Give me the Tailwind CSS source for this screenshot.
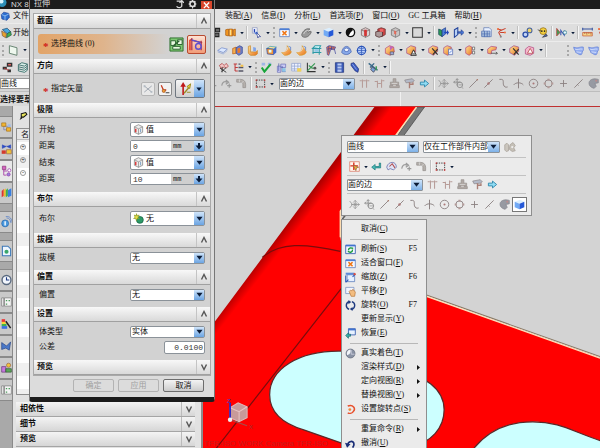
<!DOCTYPE html>
<html lang="zh-CN">
<head>
<meta charset="utf-8">
<title>NX 8</title>
<script src="https://cdn.jsdelivr.net/npm/@tailwindcss/browser@4"></script>
</head>
<body class="h-screen overflow-hidden relative flex flex-col bg-[#dcdcdc] font-['Liberation_Serif','Noto_Sans_CJK_SC',sans-serif] text-[8px] leading-[12px] text-[#111]">

<svg class="absolute w-0 h-0" aria-hidden="true">
  <defs>
    <linearGradient id="gOr" x1="0" y1="0" x2="1" y2="1"><stop offset="0" stop-color="#ffe79a"/><stop offset="1" stop-color="#e8701c"/></linearGradient>
  </defs>
  <symbol id="fold" viewBox="0 0 16 16"><path d="M1 4l4-1v10l-4-1zM6 3h5v10H6zM12 4l3-1v10l-3-1z" fill="#f59a22" stroke="#a8580a"/><path d="M7 4h2v8H7z" fill="#ffe08a"/></symbol>
  <symbol id="info" viewBox="0 0 16 16"><path d="M2 1h7v8H2z" fill="#f2f6ff" stroke="#8a93b8"/><path d="M5 3v5" stroke="#2744b0" stroke-width="2"/><circle cx="8" cy="9" r="2" fill="#4a7be0"/><path d="M8 8l6 6-3 0-1 2z" fill="#fff" stroke="#2a3a90"/></symbol>
  <symbol id="winx" viewBox="0 0 16 16"><path d="M1 3h14v11H1z" fill="#f4f8ff" stroke="#4d6fb5"/><path d="M1 2h14v2.500H1z" fill="#4d7fd6"/><path d="M5 6l6 6M11 6l-6 6" stroke="#f07818" stroke-width="2.200"/></symbol>
  <symbol id="swoosh" viewBox="0 0 16 16"><path d="M1 11C3 5 8 1 13 3c-3 1-4 3-3 5 2-2 4-2 5-1-1 4-5 8-9 8-3 0-5-1-5-4z" fill="#9a9a9a" stroke="#5a5a5a"/><path d="M4 10c1-3 4-5 6-5" stroke="#eee" fill="none"/></symbol>
  <symbol id="cube" viewBox="0 0 16 16"><path d="M1 4l8-3 6 3-7 3z" fill="#dcefff"/><path d="M1 4l7 3v8l-7-3z" fill="#72aaf5"/><path d="M8 7l7-3v8l-7 3z" fill="#2559d8"/></symbol>
  <symbol id="half" viewBox="0 0 16 16"><circle cx="8" cy="8" r="6" fill="#fff" stroke="#111" stroke-width="2"/><path d="M8 2a6 6 0 0 0-6 6 6 6 0 0 0 3 5l3-5 4-4a6 6 0 0 0-4-2z" fill="#111"/></symbol>
  <symbol id="rcube" viewBox="0 0 16 16"><path d="M2 4l6-3 6 3v8l-6 3-6-3z" fill="#d8d2d2" stroke="#6b5555"/><path d="M2 4l6 3 6-3M8 7v8" stroke="#6b5555" fill="none"/><path d="M6 4h4v9H6z" fill="#d23333"/></symbol>
  <symbol id="rcube2" viewBox="0 0 16 16"><path d="M4 3l5-2 6 2v8l-5 3-6-3z" fill="#c44" stroke="#633"/><path d="M1 7l5-1 5 1v6l-5 2-5-2z" fill="#a99" stroke="#422"/><path d="M7 3h5v4H7z" fill="#e66"/></symbol>
  <symbol id="rcube3" viewBox="0 0 16 16"><path d="M2 4l6-3 6 3v8l-6 3-6-3z" fill="#c7c3c3" stroke="#666"/><path d="M2 4l6 3 6-3M8 7v8" stroke="#777" fill="none"/><path d="M6 5l3 1v5l-3-1z" fill="#e26a5a"/></symbol>
  <symbol id="sq" viewBox="0 0 16 16"><path d="M1 1h14v14H1z" fill="#d8d8d8" stroke="#333" stroke-width="1.500"/></symbol>
  <symbol id="door" viewBox="0 0 16 16"><path d="M1 3l5 2v9l-5-3z" fill="#2f9a54" stroke="#145"/><path d="M6 4l5-3v9l-5 4z" fill="#4d7fd6" stroke="#1b3b8a"/><path d="M9 7h4V4l3 4-3 4V9H9z" fill="#2346b8"/></symbol>
  <symbol id="door2" viewBox="0 0 16 16"><path d="M2 4l5-3v10l-5 4z" fill="#b9d2f5" stroke="#24449a" stroke-width="1.500"/><path d="M7 7h5V4l4 4-4 4V9H7z" fill="#4a78d8" stroke="#1f3d90"/></symbol>
  <symbol id="tbl" viewBox="0 0 16 16"><path d="M4 1h8l3 3v10H4z" fill="#e9f1ff" stroke="#5b74b0"/><path d="M1 6h12v8H1zM1 9h12M1 11.500h12M5 6v8M9 6v8" fill="#cde" stroke="#3c5fa8"/></symbol>
  <symbol id="skt" viewBox="0 0 16 16"><path d="M2 3l5 1-3 4 3 6M7 5l7-3M6 8h7" stroke="#c8402c" fill="none" stroke-width="1.500"/><circle cx="3" cy="3" r="1.500" fill="#f07040"/><circle cx="13" cy="8" r="1.500" fill="#f07040"/><circle cx="7" cy="14" r="1.500" fill="#888"/></symbol>
  <symbol id="link" viewBox="0 0 16 16"><circle cx="5" cy="11" r="3.500" fill="#c3d4f5" stroke="#2c4fa8" stroke-width="2"/><circle cx="11" cy="5" r="3.500" fill="#f0d46a" stroke="#47639e" stroke-width="1.500"/></symbol>
  <symbol id="gear" viewBox="0 0 16 16"><circle cx="9" cy="6" r="5" fill="#f3cf3e" stroke="#8a6410"/><circle cx="7" cy="6" r="1.200" fill="#222"/><circle cx="11" cy="6" r="1.200" fill="#222"/><path d="M1 4l5 2M8 15l5-5 2 3z" fill="#4665b8" stroke="#333"/></symbol>
  <symbol id="play" viewBox="0 0 16 16"><path d="M1 2v11l5-5z" fill="#3f9f56" stroke="#b33"/><path d="M7 12V5l5 7V5" stroke="#3a55b0" fill="none" stroke-width="1.500"/><circle cx="13" cy="8" r="2.500" fill="#e8f6ff" stroke="#278"/></symbol>
  <symbol id="meas" viewBox="0 0 16 16"><path d="M1 3h14M1 1v4M15 1v4" stroke="#34509e" stroke-width="1.500"/><path d="M1 8h14v5H1z" fill="#f7d888" stroke="#c5542e"/><path d="M4 8v2M7 8v3M10 8v2M13 8v3" stroke="#933"/></symbol>
  <symbol id="sheet" viewBox="0 0 16 16"><path d="M1 8l6-4 8 2-6 5z" fill="#dbe8ff" stroke="#6c86c8"/><path d="M1 10l8 3 6-5" fill="none" stroke="#8ba2d8"/></symbol>
  <symbol id="ext" viewBox="0 0 16 16"><path d="M1 5l5-2v9l-5 1z" fill="#f9b04c" stroke="#b85a14"/><path d="M6 4l5-3 4 2v9l-5 3-4-3z" fill="#6d7fc8" stroke="#2e3f8e"/><path d="M8 5l4-1v7l-4 1z" fill="#ed7a28"/></symbol>
  <symbol id="bend" viewBox="0 0 16 16"><path d="M2 2l3-1v9l8 0 2-2v5l-3 2H5l-3-3z" fill="url(#gOr)" stroke="#c98522"/><path d="M9 3l4 1v5H9z" fill="#7fa4ea"/></symbol>
  <symbol id="ocube" viewBox="0 0 16 16"><path d="M1 5l5-3 9 1-4 3z" fill="#ffe1a0" stroke="#39a"/><path d="M1 5l10 1v8L2 13z" fill="#f39334" stroke="#2849a8"/><path d="M11 6l4-3v8l-4 3z" fill="#4368cc"/><path d="M4 7h4v4H4z" fill="#dff"/></symbol>
  <symbol id="blend" viewBox="0 0 16 16"><path d="M9 1c1 6-2 9-8 10l4 4c6 0 9-2 10-5z" fill="url(#gOr)" stroke="#d89a2a"/><path d="M2 10c5 0 8-3 8-7" stroke="#eef" fill="none"/><path d="M11 2l3 1v5" stroke="#4770c8" fill="none"/></symbol>
  <symbol id="frame" viewBox="0 0 16 16"><path d="M3 4l3-3h8l-2 4zM3 4v9M12 5v9M1 5h14M2 11h13" fill="#e4ffff" stroke="#2b9aa6" stroke-width="1.500"/><path d="M5 6h6v4H5z" fill="#8fc8e8"/></symbol>
  <symbol id="mesh" viewBox="0 0 16 16"><path d="M1 3l4-2 9 2-2 4-5-1-3 9-2-1z" fill="#e67a55" stroke="#42459e"/><path d="M4 1v10M8 2v5M2 6l10-2M12 5l2 8" stroke="#3a3f9a"/></symbol>
  <symbol id="dome" viewBox="0 0 16 16"><path d="M1 11c1-6 4-9 7-9s6 3 7 8c-4 5-10 5-14 1z" fill="#87a8e8" stroke="#3d5cae"/><ellipse cx="8" cy="7" rx="3.500" ry="2.500" fill="#f2f7ff" stroke="#3d5cae"/></symbol>
  <symbol id="globe" viewBox="0 0 16 16"><circle cx="8" cy="8" r="6" fill="#bdd2fa" stroke="#2c55b8" stroke-width="1.800"/><path d="M8 1v14M1 8h14M4 4c2 2 6 2 8 0M4 12c2-2 6-2 8 0" stroke="#2c55b8" fill="none"/></symbol>
  <symbol id="ball" viewBox="0 0 16 16"><path d="M2 5l6-4 6 2 1 7-6 5-7-3z" fill="url(#gOr)" stroke="#b0417a"/><path d="M8 1l1 7 5-5z" fill="#c266b8"/><path d="M9 10h5v4H9z" fill="#9fa8d8" stroke="#556"/></symbol>
  <symbol id="ballA" viewBox="0 0 16 16"><path d="M1 5l6-4 7 2v7l-6 5-7-3z" fill="url(#gOr)" stroke="#a04a8a"/><path d="M7 15l4-8 4 8zM9 13h4" fill="#fff" stroke="#222" stroke-width="1.300"/></symbol>
  <symbol id="ballX" viewBox="0 0 16 16"><path d="M1 5l6-4 7 2v6l-6 6-7-4z" fill="url(#gOr)" stroke="#a04a8a"/><path d="M6 5l8 9M14 6l-7 8" stroke="#333" stroke-width="1.700"/></symbol>
  <symbol id="ballB" viewBox="0 0 16 16"><path d="M1 4l5-3 6 2v8l-5 4-6-3z" fill="url(#gOr)" stroke="#a04a8a"/><path d="M8 6h6v8H8z" fill="#eef2ff" stroke="#5067b0"/><path d="M9 12l4-4" stroke="#36c"/></symbol>
  <symbol id="ballD" viewBox="0 0 16 16"><path d="M1 4l5-3 4 2v9l-4 3-5-3z" fill="url(#gOr)" stroke="#b0417a"/><path d="M11 3h3v4h-3zM11 9h3v4h-3z" fill="#fff" stroke="#555"/></symbol>
  <symbol id="ballR" viewBox="0 0 16 16"><path d="M1 6l5-4 8 1-1 4-6 1-1 5-5-1z" fill="url(#gOr)" stroke="#b0417a"/><path d="M6 12h9M13 10l2 2-2 2" stroke="#333" fill="none"/></symbol>
  <symbol id="ballP" viewBox="0 0 16 16"><path d="M2 6l5-4 7 2v8l-5 3-7-2z" fill="#f4b8cc" stroke="#b0417a"/><path d="M5 12l4-7 4 7z" fill="#fff" stroke="#a33"/></symbol>
  <symbol id="surf" viewBox="0 0 16 16"><path d="M1 3c5 3 9-1 14 0v5c-2 0-1 5-3 6-3 1-5-2-8-3 0-3-3-4-3-8z" fill="#94aef0" stroke="#5f7ed8"/><path d="M3 6c4 2 7-1 11 0M5 10c3 1 5 0 7 1" stroke="#e3ebff" fill="none"/></symbol>
  <symbol id="dims" viewBox="0 0 16 16"><path d="M2 5l4-3 3 3 3-3 3 4-3 3-3-2-4 3z" fill="#f3c6c6" stroke="#a33"/><path d="M3 9l9 6M6 7v8M12 8l-7 6" stroke="#333" stroke-width="1.300"/></symbol>
  <symbol id="dlist" viewBox="0 0 16 16"><path d="M1 3h5M3 3v10M3 8h4M3 13h4" stroke="#c03a3a" fill="none" stroke-width="1.500"/><path d="M8 3h3M8 8h7M8 13h7" stroke="#556" stroke-width="2"/><path d="M11 4h4v3h-4z" fill="#f3c04a"/></symbol>
  <symbol id="chk" viewBox="0 0 16 16"><path d="M1 1h5v4H1zM10 1h5v4h-5z" fill="#9fb6e6"/><path d="M1 8l4 6L14 3" stroke="#18a53a" stroke-width="3" fill="none"/></symbol>
  <symbol id="chart" viewBox="0 0 16 16"><path d="M2 6h5v9H2zM7 3h7v5H7z" fill="#c8c9f2" stroke="#6b6fb8"/><path d="M4 2v11M9 6v8h5" stroke="#4a55a8" fill="none"/><path d="M9 9h5v5H9z" fill="#8bc6e8"/></symbol>
  <symbol id="grid" viewBox="0 0 16 16"><path d="M1 2h13v11H1zM5 2v11M10 2v11M1 6h13M1 10h13" fill="#eef2ff" stroke="#8da0cc"/><path d="M9 9h6v5H9z" fill="#f2d255"/></symbol>
  <symbol id="plot" viewBox="0 0 16 16"><path d="M2 1v13h12" stroke="#333" stroke-width="1.500" fill="none"/><path d="M2 13L13 2M4 5l5 4 5 0" stroke="#3a9a55" stroke-width="1.700" fill="none"/><circle cx="13" cy="9" r="2" fill="#555"/></symbol>
  <symbol id="film" viewBox="0 0 16 16"><path d="M2 1h12v14H2z" fill="#3a5ab8" stroke="#1d2f78"/><path d="M5 2h6v3H5zM5 6.500h6v3H5zM5 11h6v3H5z" fill="#b9c9f0"/></symbol>
  <symbol id="pen" viewBox="0 0 16 16"><path d="M3 2l4-1 7 9-1 5-4-2-6-8z" fill="#3c5cc4" stroke="#1d2f78"/><path d="M5 3l6 8" stroke="#a8bdf2"/></symbol>
  <symbol id="tool" viewBox="0 0 16 16"><path d="M1 2l13 10M3 8l6-6" stroke="#3a6a8a" stroke-width="2"/><path d="M6 7l5 4-3 4-4-4z" fill="#7ba2d8" stroke="#334"/><path d="M12 6v6" stroke="#3a9a55" stroke-width="2"/></symbol>
  <symbol id="rot" viewBox="0 0 16 16"><path d="M1 11c1-5 4-7 8-5M7 3l4 3-4 3M9 11h6M12 8v6" fill="none" stroke="#9a9a9a" stroke-width="1.700"/></symbol>
  <symbol id="pipe" viewBox="0 0 16 16"><path d="M1 2h6c4 0 7 3 7 7v5h-4V9c0-2-1-3-3-3H1z" fill="#b5b0ac" stroke="#938f8c"/><path d="M5 2v4M11 5l-3 2" stroke="#ddd"/></symbol>
  <symbol id="marq" viewBox="0 0 16 16"><path d="M2 3h12v10H2z" fill="none" stroke="#333" stroke-width="1.300" stroke-dasharray="2 1.500"/><path d="M1 2h2v2H1zM13 2h2v2h-2zM1 12h2v2H1zM13 12h2v2h-2z" fill="#c33"/></symbol>
  <symbol id="hh" viewBox="0 0 16 16"><path d="M5 2v12M11 2v12M1 4h3M6 4h4M12 4h3" stroke="#b59a96" stroke-width="1.500"/></symbol>
  <symbol id="hh2" viewBox="0 0 16 16"><path d="M5 4v10M11 2v12M1 5h4M6 8h4M12 4h3" stroke="#b59a96" stroke-width="1.500"/></symbol>
  <symbol id="tree" viewBox="0 0 16 16"><path d="M6 1h4v5h4v4h-4v1h5v3H1v-3h5v-1H2V6h4z" fill="#b0a8a4" stroke="#96908c"/><path d="M4 8h8M6 11h4" stroke="#ddd"/></symbol>
  <symbol id="roller" viewBox="0 0 16 16"><path d="M1 3l11-2 3 3-3 2-9 1z" fill="#b4bac8" stroke="#8b8587"/><path d="M8 6v9M8 9h5V6" stroke="#aa7f76" stroke-width="2" fill="none"/></symbol>
  <symbol id="rarr" viewBox="0 0 16 16"><path d="M2 6h6V3l6 5-6 5v-3H2z" fill="#8fdcf4" stroke="#2d86aa" stroke-width="1.300"/></symbol>
  <symbol id="mv" viewBox="0 0 16 16"><path d="M9 2v12M3 8h12M9 2L7 4M9 2l2 2M9 14l-2-2M9 14l2-2M15 8l-2-2M15 8l-2 2M1 3l4 5-4 5M6 5l6 6M12 5l-6 6" stroke="#949494" stroke-width="1.200" fill="none"/></symbol>
  <symbol id="mv2" viewBox="0 0 16 16"><path d="M6 1v10M1 6h10M6 1L4 3M6 1l2 2M1 6l2-2M1 6l2 2" stroke="#8c8c8c" stroke-width="1.300" fill="none"/><circle cx="10" cy="10" r="4" fill="none" stroke="#8c8c8c" stroke-width="1.300"/><path d="M8 10h6M13 14l2 1" stroke="#8c8c8c"/></symbol>
  <symbol id="ln" viewBox="0 0 16 16"><path d="M2 14L14 2" stroke="#8a8080" stroke-width="1.300"/><circle cx="13.500" cy="2.500" r="1.200" fill="#a76"/></symbol>
  <symbol id="lm" viewBox="0 0 16 16"><path d="M2 14L14 2" stroke="#8a8080" stroke-width="1.300"/><circle cx="8" cy="8" r="1.800" fill="#a77"/></symbol>
  <symbol id="sc" viewBox="0 0 16 16"><path d="M2 2h3c4 0 2 5 3 8s3 4 6 3" fill="none" stroke="#8a8080" stroke-width="1.400"/></symbol>
  <symbol id="ix" viewBox="0 0 16 16"><path d="M8 1v14M1 10c3-4 11-4 14 0" fill="none" stroke="#8a8080" stroke-width="1.400"/></symbol>
  <symbol id="cc" viewBox="0 0 16 16"><circle cx="8" cy="8" r="6.200" fill="none" stroke="#8a8080" stroke-width="1.300"/><circle cx="8" cy="8" r="1.500" fill="#a77"/></symbol>
  <symbol id="cq" viewBox="0 0 16 16"><circle cx="8" cy="8" r="5.300" fill="none" stroke="#8a8080" stroke-width="1.300"/><path d="M6.500 1h3v3h-3zM6.500 12h3v3h-3zM1 6.500h3v3H1zM12 6.500h3v3h-3z" fill="#b49a98"/></symbol>
  <symbol id="pl" viewBox="0 0 16 16"><path d="M8 3v10M3 8h10" stroke="#8a8080" stroke-width="1.300"/></symbol>
  <symbol id="l2" viewBox="0 0 16 16"><path d="M2 14L14 2M6 9l2 2" stroke="#8a8080" stroke-width="1.300"/></symbol>
  <symbol id="blob" viewBox="0 0 16 16"><path d="M2 5c2-3 6-5 13-3v5l-5 1 2 4-3 3C4 14 0 10 2 5z" fill="#979aa2" stroke="#84848c"/><circle cx="12" cy="4" r="1.500" fill="#bb8b8b"/></symbol>
  <symbol id="gears" viewBox="0 0 16 16"><path d="M1 5l3-2 2 2v8l-3 1-2-2z" fill="#cbc6be" stroke="#a8a299"/><path d="M8 5l4-3 3 4-2 3 2 4-4 1-4-3z" fill="#c4bfb6" stroke="#a8a299"/><circle cx="11" cy="8" r="1.500" fill="#eee"/></symbol>
  <symbol id="star" viewBox="0 0 16 16"><path d="M1 1h14v14H1z" fill="#fff6ee" stroke="#d8705c"/><path d="M7 2v11M2 7h11" stroke="#e02818" stroke-width="2"/><path d="M6 6l8 3-3 1-1 4z" fill="#f3b433" stroke="#864"/></symbol>
  <symbol id="back" viewBox="0 0 16 16"><path d="M14 3v7H6v3L1 9l5-4v3h6V3z" fill="#49b9b4" stroke="#17777c"/></symbol>
  <symbol id="cap" viewBox="0 0 16 16"><path d="M1 9c1-5 5-7 8-7 4 0 6 3 6 7l-4 4-5-2-3 2z" fill="#dfe3f5" stroke="#5a62a0"/><path d="M5 8l4-4 4 6" stroke="#b34a4a" fill="none" stroke-width="1.500"/></symbol>
  <symbol id="frag" viewBox="0 0 16 16"><path d="M8 2h6v5H8zM7 9h6v5H7zM4 4h3M3 11h3" fill="#666" stroke="#222" stroke-width="1.500"/></symbol>
  <symbol id="refresh" viewBox="0 0 16 16"><path d="M1 2h14v12H1z" fill="#f2f8ff" stroke="#3e62b0" stroke-width="1.300"/><path d="M1 1h14v2.500H1z" fill="#3f72d0"/><path d="M5 9c0-4 5-4 6-2V5M11 8c0 5-5 5-6 2v2" stroke="#1c9a3c" stroke-width="2" fill="none"/></symbol>
  <symbol id="zoomr" viewBox="0 0 16 16"><path d="M3 4h11v10H3z" fill="#e6f0ff" stroke="#4b6fb5"/><path d="M1 1h13v3H1z" fill="#5c8ad8"/><path d="M1 15V5M1 15l4-4M15 3l-4 4" stroke="#2a58b8" stroke-width="1.500"/><circle cx="14" cy="3" r="1.700" fill="#e04a3a"/></symbol>
  <symbol id="pan" viewBox="0 0 16 16"><path d="M1 2h12v9H1z" fill="#f0f5ff" stroke="#6c88bb"/><path d="M6 8l2-2 2 1 1-2 2 1 2 3-1 6H9z" fill="#f3bd80" stroke="#b87534"/></symbol>
  <symbol id="spin" viewBox="0 0 16 16"><path d="M6 13.500C0 11 1 4 6 2.500M10 2.500c6 2 5 9 0 11" stroke="#1e3a80" stroke-width="2" fill="none"/><path d="M5 0l4 3-4 3zM11 16l-4-3 4-3z" fill="#1e3a80"/></symbol>
  <symbol id="restore" viewBox="0 0 16 16"><path d="M5 1h10v9H5z" fill="#e7f2ff" stroke="#3e62b0" stroke-width="1.300"/><path d="M5 1h10v2.500H5z" fill="#3f72d0"/><path d="M8 9v3H5v3l-4-4 4-4v2z" fill="#3cb0a8" stroke="#156a70"/></symbol>
  <symbol id="sph" viewBox="0 0 16 16"><circle cx="8" cy="8" r="6.500" fill="#8a93a5" stroke="#606878"/><path d="M8 2a6 6 0 0 0-5 8c3 0 6-3 5-8z" fill="#f4f6fa"/><path d="M9 3v6h5" stroke="#dde" fill="none"/></symbol>
  <symbol id="rotp" viewBox="0 0 16 16"><path d="M4 3c8-3 12 4 8 8-2 3-6 3-8 2" fill="none" stroke="#e8502c" stroke-width="2.200"/><circle cx="7" cy="8" r="2" fill="#f08a3c"/></symbol>
  <symbol id="undo" viewBox="0 0 16 16"><path d="M4 11C4 4 13 3 13 9c0 2-1 4-2 5" stroke="#1b2f78" stroke-width="2.500" fill="none"/><path d="M0 7l8 2-5 5z" fill="#1b2f78"/></symbol>
  <symbol id="part" viewBox="0 0 16 16"><path d="M2 4l6-3 6 3v8l-6 3-6-3z" fill="#ececec" stroke="#777"/><path d="M2 4l6 3v8M8 7l6-3" stroke="#888" fill="none"/><path d="M4 7v5" stroke="#d33" stroke-width="2"/><path d="M11 7v5" stroke="#58b"/></symbol>
  <symbol id="bool" viewBox="0 0 16 16"><circle cx="10" cy="10" r="5" fill="#2d9a68" stroke="#125c3c"/><path d="M5 1l1 3 3-1-2 3 2 2-3 0-1 3-1-3-3 0 2-2-1-3 3 1z" fill="#e8e04a" stroke="#8a9a1c"/></symbol>
  <symbol id="hex" viewBox="0 0 16 16"><path d="M2 5l4-4 8 2 1 6-4 5-8-2z" fill="#2d6fd0" stroke="#1a3c90"/><path d="M3 5l5 2 6-3M8 7v7" stroke="#bfe0ff" fill="none"/></symbol>
  <symbol id="start" viewBox="0 0 16 16"><path d="M2 3l7-2 5 5-5 3z" fill="#45a7e0" stroke="#246"/><path d="M1 5l7 4-1 6-5-3z" fill="#e8a32c" stroke="#754"/><path d="M9 9l5-3 1 5-7 4z" fill="#3fae4e" stroke="#254"/></symbol>
  <symbol id="plane" viewBox="0 0 16 16"><path d="M2 1l11 3v11L2 12z" fill="#eef7ee" stroke="#5a7a66" stroke-width="1.300"/></symbol>
  <symbol id="nodes" viewBox="0 0 16 16"><path d="M7 1h8v6H7zM1 7h6v4H1zM8 11h5v4H8z" fill="#333"/><path d="M9 3h4v2H9z" fill="#e66"/><path d="M3 9l7 3" stroke="#d33"/></symbol>
  <symbol id="layers" viewBox="0 0 16 16"><path d="M2 4l5-3 8 2-4 3zM2 7l9 2 4-3M2 10l9 2 4-3M2 13l9 2 4-3M2 4v9M15 3v9" fill="#d9efe9" stroke="#3b6f6c" stroke-width="1.300"/></symbol>
  <symbol id="t1" viewBox="0 0 16 16"><path d="M4 4v8h6M4 7h6" stroke="#77a" fill="none"/><path d="M1 2h6v5H1zM8 9h6v5H8z" fill="#f2b632" stroke="#a8731a"/><path d="M10 4h4v4h-4z" fill="#9bb8e8"/></symbol>
  <symbol id="t2" viewBox="0 0 16 16"><path d="M2 2v5l5-2.500zM14 2v5L9 4.500zM6 4h4" fill="#2b49c0" stroke="#2b49c0"/><path d="M1 10h6v5H1z" fill="#d33a2c"/><path d="M8 9h7v6H8z" fill="#f0c43a" stroke="#964"/></symbol>
  <symbol id="t3" viewBox="0 0 16 16"><path d="M4 6v8h4M4 8h5" stroke="#a4a" fill="none" stroke-width="1.300"/><path d="M2 1h5v5H2z" fill="#d565c0" stroke="#837"/><circle cx="12" cy="7" r="2.300" fill="#fff" stroke="#93a"/><circle cx="11" cy="13" r="2.300" fill="#98d" stroke="#93a"/></symbol>
  <symbol id="t4" viewBox="0 0 16 16"><path d="M1 5l3-3v10l-3 2z" fill="#d33"/><path d="M4 4l3-3v11l-3 2z" fill="#f0b92c"/><path d="M7 4l3-3v11l-3 2z" fill="#3fae4e"/><path d="M10 4l5-3v11l-5 2z" fill="#3a7fe0"/></symbol>
  <symbol id="t5" viewBox="0 0 16 16"><circle cx="6" cy="10" r="5" fill="#4c9be0" stroke="#2361a8"/><path d="M6 7v6" stroke="#fff" stroke-width="2"/><path d="M8 2c4 0 6 3 6 7M7 0c6-1 9 4 9 9" stroke="#4a78c8" fill="none"/></symbol>
  <symbol id="t6" viewBox="0 0 16 16"><path d="M2 1h8l4 4v10H2z" fill="#eef6ff" stroke="#3b77b8" stroke-width="1.500"/><circle cx="8" cy="9" r="3" fill="#3aa66a"/></symbol>
  <symbol id="t7" viewBox="0 0 16 16"><circle cx="8" cy="8" r="6.500" fill="#f2f6fc" stroke="#59697f" stroke-width="2"/><path d="M8 4v4h4" stroke="#1d3a80" stroke-width="1.600" fill="none"/></symbol>
  <symbol id="t8" viewBox="0 0 16 16"><path d="M1 2h3v12H1zM5 2h10v12H5z" fill="#f4f4f4" stroke="#777"/><path d="M7 5h2v2H7zM11 5h2v2h-2zM7 10h2v2H7z" fill="#4a9a5a"/></symbol>
  <symbol id="t9" viewBox="0 0 16 16"><path d="M1 1h5v4H1z" fill="#e33"/><path d="M1 5h6v3H1z" fill="#f4d43a"/><path d="M1 8h7v3H1z" fill="#3fb04e"/><path d="M1 11h8v4H1z" fill="#3a6fe0"/><path d="M7 4l7 10" stroke="#222" stroke-width="2.200"/></symbol>
  <symbol id="t10" viewBox="0 0 16 16"><path d="M1 3l7 5 6-6-2 12-5-3-6 2z" fill="#4a78c8" stroke="#2a4888"/></symbol>
  <symbol id="t11" viewBox="0 0 16 16"><circle cx="11" cy="4" r="3" fill="#f2c23a" stroke="#964"/><path d="M1 6h6v8H1z" fill="#c57adf" stroke="#637"/><path d="M7 9h8v5H7z" fill="#5aa85a" stroke="#353"/></symbol>
  <symbol id="sel" viewBox="0 0 16 16"><path d="M1 1h14v14H1z" fill="#7fca74" stroke="#2f6f2c"/><path d="M2 4h5v5H2zM9 3h5v5H9zM4 10h8v3H4z" fill="#e8f8e0" stroke="#2a6030"/><path d="M5 9l6-5" stroke="#2a6030" stroke-width="1.500"/></symbol>
  <symbol id="sketch" viewBox="0 0 16 16"><path d="M1 3l13 3M3 1v13M13 4v10" stroke="#a8344a" fill="none" stroke-width="1.300"/><path d="M1 14V3" stroke="#e03020" stroke-width="1.500"/><path d="M3 3l9 3" stroke="#5c4fd0" stroke-width="1.500"/><circle cx="10" cy="10" r="3" fill="none" stroke="#5c4fd0" stroke-width="1.500"/></symbol>
  <symbol id="xx" viewBox="0 0 16 16"><path d="M2 3l12 10M14 3L2 13" stroke="#98a0aa" stroke-width="1.400"/><path d="M1 2h3v3H1zM12 11h3v3h-3z" fill="#b4bcc4"/></symbol>
  <symbol id="vec" viewBox="0 0 16 16"><path d="M2 2l4 9 4-2" stroke="#c83a20" fill="none" stroke-width="2"/><circle cx="6" cy="11" r="2.500" fill="#f0a030" stroke="#942"/><path d="M9 14h6" stroke="#333" stroke-width="1.500"/></symbol>
  <symbol id="axis" viewBox="0 0 16 16"><path d="M6 15V4" stroke="#c01818" stroke-width="1.700"/><path d="M3 6l3-5 3 5z" fill="#c01818"/><path d="M7 13l6-7" stroke="#9a8a20" stroke-width="1.500"/><path d="M10 6l4-3-1 5zM10 12h4" fill="#e8d23a" stroke="#9a8a20"/></symbol>
  <symbol id="ptr" viewBox="0 0 16 16"><path d="M4 4l8-2 2 3-6 5-4 0z" fill="#e6e25a" stroke="#111" stroke-width="1.800"/><path d="M4 9l-3 6 5-3z" fill="#111"/></symbol>
  <symbol id="up" viewBox="0 0 16 16"><path d="M3 13l5-10 5 10" stroke="#555" stroke-width="2.800" fill="none"/></symbol>
  <symbol id="dn" viewBox="0 0 16 16"><path d="M3 3l5 10 5-10" stroke="#555" stroke-width="2.800" fill="none"/></symbol>
  <symbol id="tri" viewBox="0 0 16 16"><path d="M1 4h14l-7 9z" fill="#0b1c38"/></symbol>
  <symbol id="spn" viewBox="0 0 16 16"><path d="M6 2h4v5h5l-7 8-7-8h5z" fill="#0b1c38"/></symbol>
</svg>

<!-- Title bar -->
<header class="h-[9px] shrink-0 bg-[#1c1c1c] text-[#d8d8d8] overflow-hidden flex items-start gap-[3px] font-['Liberation_Sans',sans-serif]">
  <svg class="w-2 h-2 shrink-0" viewBox="0 0 16 16"><circle cx="4" cy="5" r="9" fill="#2c8fb8"/><circle cx="3" cy="3" r="4" fill="#d8f4ff"/></svg>
  <span class="text-[8px] leading-[9px] whitespace-nowrap">NX 8</span>
</header>

<!-- Menu bar -->
<nav class="h-[14px] shrink-0 flex items-center bg-[#e3e3e3] overflow-hidden whitespace-nowrap">
  <div class="w-[225px] shrink-0 flex items-center gap-[3px]"><svg class="w-[10px] h-[11px]"><use href="#hex"/></svg><a href="#">文件</a></div>
  <div class="flex gap-[9px]">
    <a href="#">装配(<u>A</u>)</a><a href="#">信息(<u>I</u>)</a><a href="#">分析(<u>L</u>)</a><a href="#">首选项(<u>P</u>)</a><a href="#">窗口(<u>O</u>)</a><a href="#">GC 工具箱</a><a href="#">帮助(<u>H</u>)</a>
  </div>
</nav>

<!-- Toolbars -->
<div class="h-[18px] shrink-0 flex items-center bg-[#dedede] border-t border-[#ececec] overflow-hidden">
  <div class="w-[208px] shrink-0 flex items-center gap-px pl-px whitespace-nowrap"><svg class="w-[11px] h-[12px]"><use href="#start"/></svg>开始</div>
  <div class="flex items-center" data-bar="frag fold v | info v : winx v swoosh v cube v half rcube rcube2 rcube3 v sq v | door door2 v : tbl skt v | link gear | play v | meas skt"></div>
</div>
<div class="h-[17px] shrink-0 flex items-center bg-[#dedede] border-t border-[#ececec] overflow-hidden">
  <div class="w-[215px] shrink-0 flex items-center" data-bar=": plane v"></div>
  <div class="flex items-center flex-1" data-bar="sheet ext bend | ocube blend blend frame mesh dome globe v : ball v ballA v ballX ballB v ballD v ballR v ballX ballP v | ~ : surf surf"></div>
</div>
<div class="h-[17px] shrink-0 flex items-center bg-[#dcdcdc] border-t border-[#ececec] overflow-hidden">
  <div class="w-[216px] shrink-0 flex items-center" data-bar="nodes layers"></div>
  <div class="flex items-center" data-bar="dims dlist v : chk chart grid plot v : film pen | tool v |"></div>
</div>
<div class="h-[16px] shrink-0 flex items-center bg-[#d6d6d6] border-t border-[#b4b4b4] overflow-hidden">
  <div class="w-[204px] shrink-0 flex items-center">
    <select aria-label="曲线类型" class="appearance-none w-[60px] h-[11px] bg-white border border-[#999] text-[8px] leading-[9px]"><option>曲线</option></select>
  </div>
  <div class="flex items-center" data-bar="rot rot pipe | marq v"></div>
  <div class="flex w-[76px] h-[12px] shrink-0 bg-white border border-[#8b9299] rounded-[1px] ml-1 mr-[2px]">
    <select aria-label="面规则" class="appearance-none flex-1 min-w-0 text-[8px] leading-[10px]"><option>面的边</option></select>
    <span class="w-[11px] bg-linear-to-b from-[#cfe4fa] to-[#7db1e8] flex items-center justify-center"><svg class="w-[7px] h-[7px]"><use href="#tri"/></svg></span>
  </div>
  <div class="flex items-center" data-bar="hh hh2 tree roller rarr | mv mv2 ln lm sc ix cc cq pl l2 blob |"></div>
</div>
<div class="h-[15px] shrink-0 flex items-center bg-[#dadada] border-t border-[#bdbdbd] overflow-hidden whitespace-nowrap">
  <strong class="w-[401px] h-full border-r border-[#f0f0f0] leading-[15px]">选择要草图的平面</strong>
</div>

<main class="flex-1 min-h-0 flex">
  <!-- Resource bar -->
  <aside class="w-[13px] shrink-0 bg-[#a9a9a9] border-r border-[#8a8a8a] pt-[10px] flex flex-col overflow-hidden" id="tabs"></aside>

  <!-- Navigator -->
  <section class="w-[190px] shrink-0 bg-[#e2e2e2] border-r-2 border-[#8c8c8c] flex flex-col pl-[3px] pr-[6px] pt-[5px]">
    <svg class="w-[9px] h-[10px] ml-[3px] shrink-0"><use href="#ptr"/></svg>
    <div class="mt-[7px] flex-1 min-h-0 border border-[#8f8f8f] bg-white overflow-hidden bg-[repeating-linear-gradient(#f0f0f0_0_13px,#ffffff_13px_26px)]">
      <div class="h-[11px] pl-1 border-b border-[#bbb] bg-[#e6e6e6] leading-[11px]">名称</div>
      <div class="flex flex-col gap-[7px] pt-1 pl-[3px]">
        <span class="w-[6px] h-[6px] border border-[#999] rounded-full text-[6px] leading-[4px] text-center">+</span>
        <span class="w-[6px] h-[6px] border border-[#999] rounded-full text-[6px] leading-[4px] text-center">+</span>
        <span class="w-[6px] h-[6px] border border-[#999] rounded-full text-[6px] leading-[3px] text-center">-</span>
      </div>
    </div>
    <div class="mt-[4px] h-[2px] w-[32px] mx-auto bg-[#b0b0b0] shrink-0"></div>
    <div class="mt-px mb-px shrink-0 flex flex-col font-bold">
      <button class="h-[15px] flex items-center border-b border-[#a5a5a5] bg-linear-to-b from-[#f4f4f4] to-[#d6d6d6] pl-1"><span class="flex-1 text-left">相依性</span><span class="w-[14px] h-full border-l border-[#bbb] flex items-center justify-center"><svg class="w-2 h-2"><use href="#dn"/></svg></span></button>
      <button class="h-[15px] flex items-center border-b border-[#a5a5a5] bg-linear-to-b from-[#f4f4f4] to-[#d6d6d6] pl-1"><span class="flex-1 text-left">细节</span><span class="w-[14px] h-full border-l border-[#bbb] flex items-center justify-center"><svg class="w-2 h-2"><use href="#dn"/></svg></span></button>
      <button class="h-[15px] flex items-center border-b border-[#a5a5a5] bg-linear-to-b from-[#f4f4f4] to-[#d6d6d6] pl-1"><span class="flex-1 text-left">预览</span><span class="w-[14px] h-full border-l border-[#bbb] flex items-center justify-center"><svg class="w-2 h-2"><use href="#dn"/></svg></span></button>
    </div>
  </section>

  <!-- Graphics window -->
  <section class="flex-1 min-w-0 bg-[#d3d3d3] border-t border-[#c03030] overflow-hidden">
    <svg class="w-full h-full block" viewBox="204 107 396 341" preserveAspectRatio="xMinYMin slice">
      <defs>
        <linearGradient id="edge" gradientUnits="userSpaceOnUse" x1="290" y1="221" x2="299" y2="228"><stop offset="0" stop-color="#b00000"/><stop offset="1" stop-color="#ff0000"/></linearGradient>
      </defs>
      <path d="M417 107h8L345 217l-5 6z" fill="#777" stroke="#444" stroke-width="0.700"/>
      <path d="M375 107h42L341 211v26q4 40 86 59l173 61v92H204V337z" fill="url(#edge)"/>
      <path d="M417 107L341 211v26" fill="none" stroke="#ffdcb0" stroke-width="1.500"/>
      <path d="M427 294.500L600 356" fill="none" stroke="#8a7a66" stroke-width="1"/>
      <path d="M427 296L600 357.500" fill="none" stroke="#ffe2bc" stroke-width="1.300"/>
      <g fill="#ccffff" stroke="#5a2828" stroke-width="1.200">
        <path d="M341 350.500C300 350 270.500 368 270.500 394c0 18 14 29 34 35l37 13c50 18 103 5 103-33 0-22-20-33-46-41-20-7-35-17.500-57.500-17.500z"/>
        <path d="M473 449c14-18 33-28 60-28 27 0 40 10 68 19v9z"/>
      </g>
      <path d="M263 257c18-15 42-14 78-6M342 288L216 449" fill="none" stroke="#7a0c0c" stroke-width="1.200"/>
      <path d="M231 407l8-5 9 4v11l-8 4-9-4z" fill="#c89a9a" stroke="#e0b8b8"/>
      <path d="M231 407l9 4 8-5M240 411v10" fill="none" stroke="#e6c4c4"/>
      <path d="M231 419v-17" stroke="#2a2ac8" stroke-width="1.800"/>
      <path d="M231 419l17 6" stroke="#a05050"/>
      <circle cx="231" cy="419" r="2.200" fill="#f0f0f0"/>
      <text x="228" y="402" font-size="6" fill="#3a3ac0" font-family="Liberation Sans">Z</text>
      <text x="250" y="428" font-size="6" fill="#a03030" font-family="Liberation Sans">X</text>
      <text x="205" y="445" font-size="8" fill="#c81c1c" font-family="Liberation Sans">TFR-ISO WORK Camera TFR-ISO</text>
    </svg>
  </section>
</main>

<!-- Extrude dialog -->
<form class="absolute left-[29px] top-0 w-[186px] bg-[#dcdcdc] border-x border-[#777] border-b-[5px] border-b-[#1c1c1c] rounded-b-[3px] flex flex-col">
  <div class="h-[9px] bg-[#1c1c1c] text-[#ddd] flex items-start pl-1 pr-[2px]">
    <span class="flex-1 text-[8px] leading-[8px]">拉伸</span>
    <div class="flex items-end gap-1 h-full">
      <button type="button" aria-label="重置"><svg class="w-[9px] h-[9px]" viewBox="0 0 16 16"><path d="M3 2h9v9c-2 4-8 3-9 0M8 5l4-4 4 4" stroke="#ddd" stroke-width="2.200" fill="none"/></svg></button>
      <button type="button" aria-label="设置"><svg class="w-[9px] h-[9px]" viewBox="0 0 16 16"><circle cx="8" cy="7" r="4.500" fill="none" stroke="#ddd" stroke-width="3"/><path d="M8 0v3M8 11v4M1 7h3M12 7h3M3 2l2 2M13 2l-2 2M3 12l2-2M13 12l-2-2" stroke="#ddd" stroke-width="2"/></svg></button>
      <button type="button" aria-label="关闭" class="w-[11px] h-[8px] bg-[#d8472c] flex items-center justify-center"><svg class="w-[7px] h-[7px]" viewBox="0 0 16 16"><path d="M2 1l12 13M14 1L2 14" stroke="#fff" stroke-width="3"/></svg></button>
    </div>
  </div>
  <div class="mx-[3px] mt-1 border border-[#a9a9a9] bg-[#d2d2d2] flex flex-col" id="groups">
    <h2 data-title="截面" data-ic="up"></h2>
    <div class="h-[30px] px-1 flex items-center">
      <div class="h-5 flex-1 flex items-center rounded-[3px] bg-linear-to-r from-[#e2a468] via-[#dfb48c] to-[#d2d2d2] pl-[5px]"><span class="text-[#d01818] font-bold text-[11px] w-2 pt-1">*</span><span class="flex-1">选择曲线 (0)</span></div>
      <button type="button" aria-label="绘制截面" class="w-[15px] h-[15px] mr-[3px]"><svg class="w-full h-full"><use href="#sel"/></svg></button>
      <button type="button" aria-label="曲线" class="w-[19px] h-[19px] border border-[#b84a30] rounded-[2px] bg-linear-to-b from-[#fde2d4] to-[#f19c78] p-px"><svg class="w-full h-full"><use href="#sketch"/></svg></button>
    </div>
    <h2 data-title="方向" data-ic="up"></h2>
    <div class="h-[29px] px-[5px] flex items-center gap-[3px]">
      <span class="text-[#d01818] font-bold text-[11px] w-[5px] pt-1 ml-1">*</span><span class="flex-1">指定矢量</span>
      <button type="button" aria-label="反向" class="w-[14px] h-[14px] border border-[#b5b5b5] rounded-[2px] bg-[#e8e8e8] p-px"><svg class="w-full h-full"><use href="#xx"/></svg></button>
      <button type="button" aria-label="矢量对话框" class="w-[14px] h-[14px] border border-[#8a8a8a] rounded-[2px] bg-[#f2f2f2] p-px"><svg class="w-full h-full"><use href="#vec"/></svg></button>
      <button type="button" aria-label="矢量类型" class="w-[30px] h-[19px] border border-[#6f7780] rounded-[2px] bg-linear-to-b from-[#f6f6f6] to-[#cfcfcf] flex"><svg class="flex-1 h-[15px] mt-px"><use href="#axis"/></svg><span class="w-[10px] h-full bg-linear-to-b from-[#cfe4fa] to-[#6ba4e2] flex items-center justify-center"><svg class="w-[6px] h-[6px]"><use href="#tri"/></svg></span></button>
    </div>
    <h2 data-title="极限" data-ic="up"></h2>
    <div class="h-[74px] px-[5px] pt-[3px] flex flex-col">
      <div data-select="开始|值|part"></div>
      <div data-spin="距离|0"></div>
      <div data-select="结束|值|part"></div>
      <div data-spin="距离|10"></div>
    </div>
    <h2 data-title="布尔" data-ic="up"></h2>
    <div class="h-[26px] px-[5px] pt-[3px]"><div data-select="布尔|无|bool"></div></div>
    <h2 data-title="拔模" data-ic="up"></h2>
    <div class="h-[22px] px-[5px] pt-px"><div data-select="拔模|无|"></div></div>
    <h2 data-title="偏置" data-ic="up"></h2>
    <div class="h-[22px] px-[5px] pt-px"><div data-select="偏置|无|"></div></div>
    <h2 data-title="设置" data-ic="up"></h2>
    <div class="h-[38px] px-[5px] pt-px">
      <div data-select="体类型|实体|"></div>
      <div class="flex items-center h-[14px]"><label for="tol" class="flex-1">公差</label><input id="tol" value="0.0100" class="w-[41px] h-[13px] bg-white border border-[#8b9299] rounded-[2px] text-right pr-px font-['Liberation_Mono',monospace] text-[8px] text-[#333]"></div>
    </div>
    <h2 data-title="预览" data-ic="dn"></h2>
  </div>
  <div class="flex justify-end gap-[4px] px-[10px] pt-[3px] pb-[5px]">
    <button type="button" disabled class="w-[41px] h-[13px] border border-[#b3b3b3] rounded-[2px] text-[#a0a0a0] leading-[11px]">确定</button>
    <button type="button" disabled class="w-[41px] h-[13px] border border-[#b3b3b3] rounded-[2px] text-[#a0a0a0] leading-[11px]">应用</button>
    <button type="button" class="w-[41px] h-[13px] border border-[#6d6d6d] rounded-[2px] bg-linear-to-b from-[#f4f4f4] to-[#cccccc] leading-[11px]">取消</button>
  </div>
</form>

<!-- Floating selection bar -->
<div class="absolute left-[341px] top-[135px] w-[191px] bg-[#ebebeb] border border-[#8e8e8e] px-[5px] pb-px divide-y divide-[#c2c2c2]">
  <div class="h-[22px] flex items-center gap-[4px]">
    <div class="flex w-[72px] h-[12px] bg-white border border-[#8b9299] rounded-[1px]"><select aria-label="曲线规则" class="appearance-none flex-1 min-w-0 text-[8px] leading-[10px]"><option>曲线</option></select><span class="w-[11px] bg-linear-to-b from-[#cfe4fa] to-[#7db1e8] flex items-center justify-center"><svg class="w-[7px] h-[7px]"><use href="#tri"/></svg></span></div>
    <div class="flex w-[77px] h-[12px] bg-white border border-[#8b9299] rounded-[1px]"><select aria-label="选择范围" class="appearance-none flex-1 min-w-0 text-[8px] leading-[10px]"><option>仅在工作部件内部</option></select><span class="w-[11px] bg-linear-to-b from-[#cfe4fa] to-[#7db1e8] flex items-center justify-center"><svg class="w-[7px] h-[7px]"><use href="#tri"/></svg></span></div>
    <svg class="w-3 h-3"><use href="#gears"/></svg>
  </div>
  <div class="h-[18px] flex items-center" data-bar="star v back cap rot pipe | marq v"></div>
  <div class="h-[18px] flex items-center gap-[2px]">
    <div class="flex w-[76px] h-[12px] bg-white border border-[#8b9299] rounded-[1px]"><select aria-label="面规则" class="appearance-none flex-1 min-w-0 text-[8px] leading-[10px]"><option>面的边</option></select><span class="w-[11px] bg-linear-to-b from-[#cfe4fa] to-[#7db1e8] flex items-center justify-center"><svg class="w-[7px] h-[7px]"><use href="#tri"/></svg></span></div>
    <div class="flex items-center" data-bar="hh hh2 tree roller rarr"></div>
  </div>
  <div class="h-[20px] flex items-center justify-between">
    <div class="flex items-center" data-bar="mv mv2 ln lm sc ix cc cq pl l2 blob"></div>
    <button type="button" aria-label="着色" class="w-[15px] h-[15px] shrink-0 border border-[#777] bg-white p-px"><svg class="w-full h-full"><use href="#cube"/></svg></button>
  </div>
</div>

<!-- Context menu -->
<div class="absolute left-[341px] top-[219px] bottom-0 w-[86px] bg-[#ebebeb] border border-b-0 border-[#8e8e8e] pt-[2px] overflow-hidden" role="menu" id="menu"></div>

<script>
const svg = (n, c) => `<svg class="${c}"><use href="#${n}"/></svg>`;

// Toolbars: "v" is a drop-down arrow, "|" a separator, ":" a grip, "~" an empty gap.
document.querySelectorAll('[data-bar]').forEach(el => {
  el.innerHTML = el.dataset.bar.split(' ').map(t => {
    if (t === 'v') return '<span class="w-[7px] shrink-0 flex justify-center"><svg class="w-1 h-1"><use href="#tri"/></svg></span>';
    if (t === '|') return '<span class="w-1 h-[13px] shrink-0 flex justify-center"><i class="w-px h-full bg-[#f6f6f6] border-l border-[#c0c0c0] box-content"></i></span>';
    if (t === ':') return '<span class="w-[6px] h-[11px] shrink-0 flex justify-center"><i class="border-l-2 border-dotted border-[#a8a8a8]"></i></span>';
    if (t === '~') return '<span class="w-[17px] shrink-0"></span>';
    return `<button type="button" aria-label="${t}" class="w-[15px] h-[15px] shrink-0 flex items-center justify-center">${svg(t, 'w-[11px] h-[11px]')}</button>`;
  }).join('');
});

document.getElementById('tabs').innerHTML = ['t1','t2','t3','t4','','t5','','t6','','t7','t8','t9','t10','t11','t8'].map((t, i) =>
  t ? `<button type="button" aria-label="${t}" class="h-[22px] shrink-0 border-y border-[#8a8a8a] flex items-center pl-px ${i === 2 ? 'bg-[#e8e8e8]' : 'bg-[#c9c9c9]'}">${svg(t, 'w-[11px] h-[12px]')}</button>`
    : '<span class="h-[7px] shrink-0"></span>').join('');

document.querySelectorAll('h2[data-title]').forEach(h => {
  h.className = 'h-[15px] flex items-center pl-[3px] font-bold bg-linear-to-b from-[#f8f8f8] to-[#d9d9d9] border-b border-[#a0a0a0]';
  h.innerHTML = `<span class="flex-1">${h.dataset.title}</span><button type="button" aria-label="${h.dataset.title}" class="w-[14px] h-full border-l border-[#c4c4c4] flex items-center justify-center">${svg(h.dataset.ic, 'w-2 h-2')}</button>`;
});

let uid = 0;
document.querySelectorAll('[data-select]').forEach(el => {
  const [label, value, icon] = el.dataset.select.split('|'), id = 'f' + (++uid);
  el.className = 'flex items-center h-[17px]';
  el.innerHTML = `<label for="${id}" class="flex-1">${label}</label><div class="flex items-center w-[75px] ${icon ? 'h-[15px]' : 'h-[12px]'} bg-white border border-[#8b9299] rounded-[2px]">${icon ? svg(icon, 'w-[11px] h-[11px] ml-[2px] mr-px shrink-0') : ''}<select id="${id}" class="appearance-none flex-1 min-w-0 pl-px h-full text-[8px] leading-[10px]"><option>${value}</option></select><span class="w-[10px] h-full bg-linear-to-b from-[#cfe4fa] to-[#6ba4e2] flex items-center justify-center">${svg('tri', 'w-[7px] h-[7px]')}</span></div>`;
});
document.querySelectorAll('[data-spin]').forEach(el => {
  const [label, value] = el.dataset.spin.split('|'), id = 'f' + (++uid);
  el.className = 'flex items-center h-[16px]';
  el.innerHTML = `<label for="${id}" class="flex-1">${label}</label><div class="flex items-center w-[75px] h-[12px] bg-[#cfcfcf] border border-[#8b9299] rounded-[2px]"><input id="${id}" value="${value}" class="w-[40px] h-full bg-white pl-[2px] font-['Liberation_Mono',monospace] text-[8px] text-[#333]"><span class="flex-1 pl-[2px] font-['Liberation_Mono',monospace] text-[7px]">mm</span><button type="button" aria-label="${label}" class="w-[10px] h-full bg-linear-to-b from-[#cfe4fa] to-[#6ba4e2] flex items-center justify-center">${svg('spn', 'w-2 h-2')}</button></div>`;
});

// [icon, label, accelerator, shortcut or ">" for a submenu]; null is a separator.
document.getElementById('menu').innerHTML = [
  ['', '取消', 'C', ''], null,
  ['refresh', '刷新', 'S', 'F5'], ['winx', '适合窗口', 'F', ''], ['zoomr', '缩放', 'Z', 'F6'], ['pan', '平移', 'P', ''],
  ['spin', '旋转', 'O', 'F7'], ['', '更新显示', 'Y', ''], ['restore', '恢复', 'E', ''], null,
  ['sph', '真实着色', 'T', ''], ['', '渲染样式', 'D', '>'], ['', '定向视图', 'R', '>'], ['', '替换视图', 'V', '>'],
  ['rotp', '设置旋转点', 'S', ''], null,
  ['', '重复命令', 'R', '>'], ['undo', '撤消', 'U', '']
].map(m => !m ? '<div class="h-[6px] flex items-center px-2"><hr class="w-full border-[#b8b8b8]"></div>'
  : `<button type="button" role="menuitem" class="w-full h-[14px] flex items-center pl-[3px] pr-[5px] whitespace-nowrap text-left"><span class="w-4 shrink-0">${m[0] ? svg(m[0], 'w-[11px] h-[11px]') : ''}</span><span class="flex-1">${m[1]}(<u>${m[2]}</u>)</span>${m[3] === '>' ? '<svg class="w-1 h-[5px] shrink-0" viewBox="0 0 4 5"><path d="M0 0v5l3-2.500z" fill="#111"/></svg>' : `<span class="pr-1">${m[3]}</span>`}</button>`).join('');
</script>
</body>
</html>
